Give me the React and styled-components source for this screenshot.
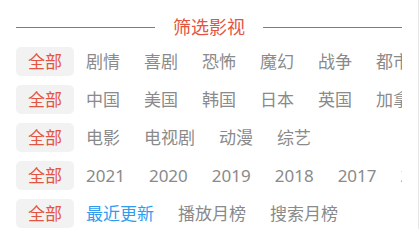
import React from 'react';
import styled, { createGlobalStyle } from 'styled-components';

const GlobalStyle = createGlobalStyle`
  html, body {
    margin: 0;
    padding: 0;
    background: #ffffff;
  }
  body {
    font-family: "Noto Sans", "Noto Sans CJK SC", sans-serif;
  }
`;

const RED = '#e4553f';

const filters = [
  ['剧情', '喜剧', '恐怖', '魔幻', '战争', '都市', '科幻'],
  ['中国', '美国', '韩国', '日本', '英国', '加拿大'],
  ['电影', '电视剧', '动漫', '综艺'],
  ['2021', '2020', '2019', '2018', '2017', '2016'],
  ['最近更新', '播放月榜', '搜索月榜'],
];

const App = () => {
  return (
    <>
      <GlobalStyle />
      <Panel>
        <Heading>
          <Rule />
          <HeadingText>筛选影视</HeadingText>
          <Rule />
        </Heading>
        <Rows>
          {filters.map((row, i) => (
            <Row key={i}>
              <AllPill>全部</AllPill>
              {row.map((label, j) => (
                <Option key={label} $active={i === 4 && j === 0}>
                  {label}
                </Option>
              ))}
            </Row>
          ))}
        </Rows>
      </Panel>
    </>
  );
};

export default App;

const Panel = styled.div`
  box-sizing: border-box;
  width: 419px;
  height: 229px;
  padding: 0 16px;
  border-right: 1px solid #e8e8e8;
  overflow: hidden;
`;

const Heading = styled.div`
  display: flex;
  align-items: center;
  height: 30px;
  margin-top: 12px;
`;

const Rule = styled.div`
  flex: 1;
  height: 1px;
  background: ${RED};
`;

const HeadingText = styled.span`
  padding: 0 18px;
  font-size: 18px;
  color: ${RED};
  line-height: 30px;
`;

const Rows = styled.div`
  display: flex;
  flex-direction: column;
  gap: 9px;
  margin-top: 5px;
`;

const Row = styled.div`
  display: flex;
  align-items: center;
  height: 29px;
  overflow: hidden;
  white-space: nowrap;
`;

const AllPill = styled.div`
  flex-shrink: 0;
  box-sizing: border-box;
  width: 58px;
  height: 29px;
  line-height: 29px;
  text-align: center;
  border-radius: 5px;
  background: #f2f2f2;
  color: ${RED};
  font-size: 17px;
`;

const Option = styled.span`
  flex-shrink: 0;
  padding: 0 12px;
  font-size: 17px;
  line-height: 29px;
  color: ${(p) => (p.$active ? '#2f9cf0' : '#8a8a8a')};
`;
